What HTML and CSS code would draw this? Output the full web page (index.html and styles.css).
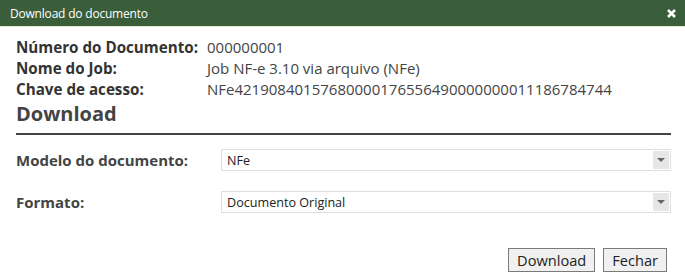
FILE: index.html
```html
<!DOCTYPE html>
<html lang="pt">
<head>
  <meta charset="utf-8" />
  <title>Download do documento</title>
  <link rel="stylesheet" href="styles.css">
</head>
<body>
  <div class="dialog">
    <!-- Titlebar -->
    <div class="titlebar">
      <span class="title">Download do documento</span>
      <span class="close">
        <svg width="9" height="9" viewBox="0 0 9 9"><path d="M1 1L8 8M8 1L1 8" stroke="#fff" stroke-width="2.6"/></svg>
      </span>
    </div>

    <div class="content">
      <div class="info">
        <div class="lbl">Número do Documento:</div><div class="val">000000001</div>
        <div class="lbl">Nome do Job:</div><div class="val">Job NF-e 3.10 via arquivo (NFe)</div>
        <div class="lbl">Chave de acesso:</div><div class="val">NFe42190840157680000176556490000000011186784744</div>
      </div>

      <h2 class="section">Download</h2>

      <div class="form">
        <div class="row">
          <label class="lbl">Modelo do documento:</label>
          <div class="select"><span class="sel-text">NFe</span><span class="arrow"></span></div>
        </div>
        <div class="row">
          <label class="lbl">Formato:</label>
          <div class="select"><span class="sel-text">Documento Original</span><span class="arrow"></span></div>
        </div>
      </div>

      <div class="buttons">
        <button class="btn">Download</button>
        <button class="btn">Fechar</button>
      </div>
    </div>
  </div>
</body>
</html>
```
FILE: styles.css
```css
html,body{margin:0;background:#fff;font-family:"Open Sans",Arial,sans-serif;color:#333}
.titlebar{display:flex;align-items:center;justify-content:space-between;height:26px;padding:0 9px 0 10px;background:#3a5d3a;border-bottom:1px solid #e4ecd2;color:#fff}
.title{font-size:12px;letter-spacing:-.2px}
.close{display:flex;align-items:center}
.content{padding:10px 14px 0 16px}
.info{display:grid;grid-template-columns:191px 1fr;line-height:21px;font-size:15px}
.info .lbl{font-weight:bold;color:#333;font-size:15.2px}
.info .val{color:#444}
.section{margin:0;font-size:20px;line-height:28px;font-weight:bold;color:#444;padding-bottom:5px;border-bottom:2px solid #444}
.form{display:flex;flex-direction:column;gap:20px;padding-top:14px}
.row{display:flex;align-items:center}
.row .lbl{width:205px;flex:none;font-size:15px;font-weight:bold;color:#444}
.select{flex:1;display:flex;align-items:center;height:20px;border:1px solid #dedede;padding:0 1px 0 5px}
.sel-text{flex:1;font-size:12.6px;color:#222}
.arrow{width:16px;height:18px;background:#e6e6e6;position:relative}
.arrow::after{content:"";position:absolute;left:4px;top:7px;border-left:4px solid transparent;border-right:4px solid transparent;border-top:4px solid #666}
.buttons{display:flex;justify-content:flex-end;gap:8px;padding:35px 4px 0 0}
.btn{font-family:"Open Sans",Arial,sans-serif;font-size:14.6px;height:24px;padding:0 8px;line-height:20px;background:#f0f0f0;border:1px solid #7a7a7a;color:#222;border-radius:0}
```
